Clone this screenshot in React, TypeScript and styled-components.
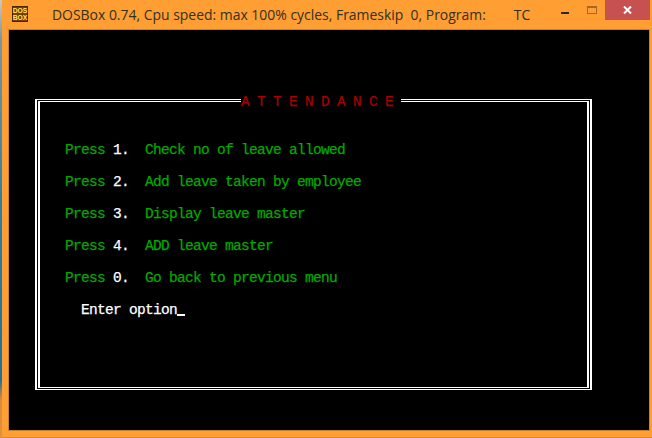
import React from 'react';
import styled, { createGlobalStyle } from 'styled-components';

const GlobalStyle = createGlobalStyle`
  html, body {
    margin: 0;
    padding: 0;
    background: #ff9e33;
  }
`;

const Page = styled.div`
  display: flex;
  width: 652px;
  height: 438px;
  padding-left: 2px;
  box-sizing: border-box;
  overflow: hidden;
  background: linear-gradient(to bottom, #c9c9c0 0, #7a93a3 40px, #2f7ea8 200px, #1f6f9c 380px, #d98a3c 400px, #e0913f 438px);
`;

const Window = styled.div`
  flex: 1;
  display: flex;
  flex-direction: column;
  background: #ff9e33;
  border-bottom: 1px solid #d98a2e;
`;

const TitleBar = styled.div`
  height: 29px;
  display: flex;
  align-items: flex-start;
  padding: 0 2px 0 10px;
`;

const AppIcon = styled.svg`
  width: 16px;
  height: 16px;
  margin-top: 6px;
  flex: none;
`;

const Caption = styled.div`
  flex: 1;
  margin: 4px 0 0 24px;
  font-family: 'Open Sans', 'Noto Sans', sans-serif;
  font-size: 13.95px;
  line-height: 22px;
  color: #33301f;
  white-space: pre;
`;

const ProgramName = styled.span`
  margin-left: 28px;
`;

const Control = styled.div`
  width: 27px;
  height: 20px;
  display: flex;
  align-items: center;
  justify-content: center;
`;

const MinGlyph = styled.div`
  width: 8px;
  height: 2px;
  margin-top: 6px;
  background: #2b2a28;
`;

const MaxGlyph = styled.div`
  width: 10px;
  height: 8px;
  box-sizing: border-box;
  border: 1px solid #a5682a;
  border-top-width: 2px;
`;

const CloseButton = styled.div`
  width: 45px;
  height: 20px;
  display: flex;
  align-items: center;
  justify-content: center;
  background: #c75050;
`;

const Screen = styled.div`
  width: 614px;
  height: 331px;
  margin-left: 6px;
  padding: 69px 0 0 26px;
  border: 1px solid #c9822b;
  background: #000;
  font-family: 'Liberation Mono', 'DejaVu Sans Mono', monospace;
  font-size: 14.5px;
  letter-spacing: -0.7px;
  line-height: 16px;
  white-space: pre;
  -webkit-text-stroke: 0.25px currentColor;
`;

const Frame = styled.div`
  position: relative;
  width: 557px;
  height: 291px;
  box-sizing: border-box;
  border: solid #fff;
  border-width: 1px 2px;
  padding: 1px;
`;

const FrameInner = styled.div`
  height: 100%;
  box-sizing: border-box;
  border: solid #fff;
  border-width: 1px 2px;
  padding: 40px 0 0 25px;
`;

const FrameTitle = styled.div`
  position: absolute;
  top: -6px;
  left: 204px;
  width: 160px;
  height: 16px;
  background: #000;
  color: #aa0000;
`;

const Row = styled.div`
  height: 16px;
  margin-bottom: 16px;
  color: #00aa00;
`;

const Key = styled.span`
  color: #fff;
`;

const Prompt = styled.div`
  height: 16px;
  margin-left: 16px;
  color: #fff;
`;

const Cursor = styled.span`
  display: inline-block;
  width: 8px;
  height: 2px;
  vertical-align: -2px;
  background: #fff;
`;

const items = [
  { key: '1', label: 'Check no of leave allowed' },
  { key: '2', label: 'Add leave taken by employee' },
  { key: '3', label: 'Display leave master' },
  { key: '4', label: 'ADD leave master' },
  { key: '0', label: 'Go back to previous menu' },
];

const App = () => (
  <>
    <GlobalStyle />
    <Page>
      <Window>
        <TitleBar>
          <AppIcon viewBox="0 0 16 16">
            <rect width="16" height="16" fill="#4a2206" />
            <rect x="1" y="1" width="14" height="14" fill="#7a3c0c" />
            <text x="8" y="7.4" textAnchor="middle" fontFamily="Liberation Sans, sans-serif" fontWeight="bold" fontSize="6.8" fill="#ffe84a">DOS</text>
            <text x="8" y="14.2" textAnchor="middle" fontFamily="Liberation Sans, sans-serif" fontWeight="bold" fontSize="6.8" fill="#ffe84a">BOX</text>
          </AppIcon>
          <Caption>
            {'DOSBox 0.74, Cpu speed: max 100% cycles, Frameskip  0, Program:'}
            <ProgramName>TC</ProgramName>
          </Caption>
          <Control><MinGlyph /></Control>
          <Control><MaxGlyph /></Control>
          <CloseButton>
            <svg width="9" height="8" viewBox="0 0 9 8">
              <path d="M1 0.5 L8 7.5 M8 0.5 L1 7.5" stroke="#fff" strokeWidth="2" fill="none" />
            </svg>
          </CloseButton>
        </TitleBar>
        <Screen>
          <Frame>
            <FrameTitle>{'A T T E N D A N C E '}</FrameTitle>
            <FrameInner>
              {items.map((item) => (
                <Row key={item.key}>
                  {'Press '}
                  <Key>{item.key}.</Key>
                  {'  ' + item.label}
                </Row>
              ))}
              <Prompt>
                Enter option
                <Cursor />
              </Prompt>
            </FrameInner>
          </Frame>
        </Screen>
      </Window>
    </Page>
  </>
);

export default App;
